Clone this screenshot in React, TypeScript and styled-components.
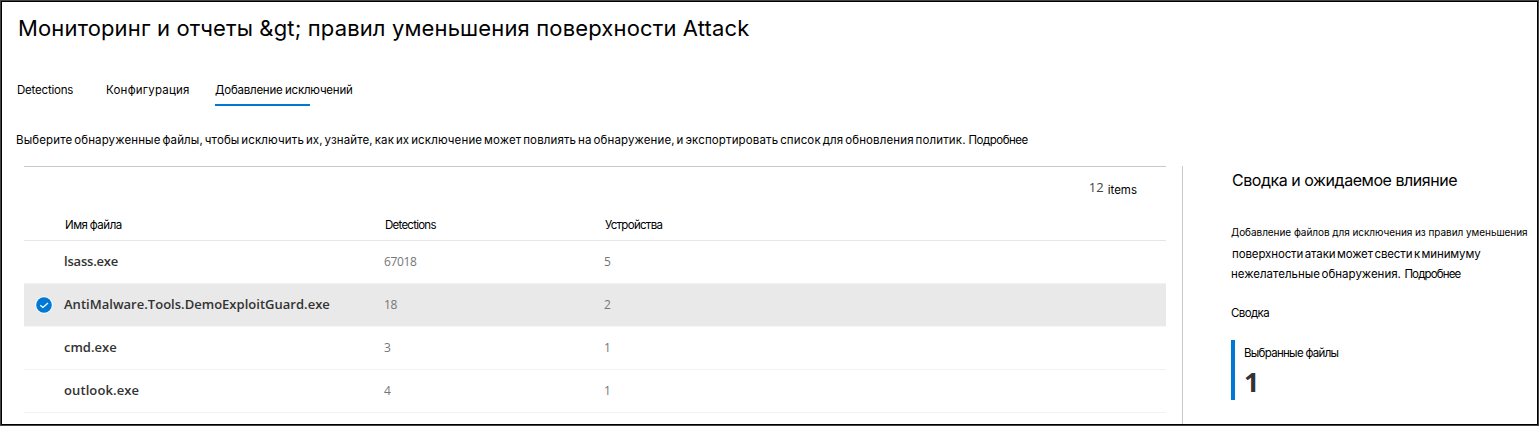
import React from "react";
import styled, { createGlobalStyle } from "styled-components";

const GlobalStyle = createGlobalStyle`
  *, *::before, *::after { box-sizing: border-box; }
  body { margin: 0; background: #fff; }
`;

const Page = styled.main`
  width: 1539px;
  height: 426px;
  border: 1px solid #444;
  outline: 1px solid #000;
  outline-offset: -2px;
  background: #fff;
  color: #000;
  overflow: hidden;
  display: flex;
  flex-direction: column;
  font-family: Inter, "Liberation Sans", sans-serif;
`;

const Text = styled.span<{ $size?: number; $spacing?: number; $word?: number }>`
  display: block;
  white-space: nowrap;
  font-size: ${(p) => p.$size ?? 11.5}px;
  line-height: 20px;
  letter-spacing: ${(p) => p.$spacing ?? 0}px;
  word-spacing: ${(p) => p.$word ?? 0}px;
`;

const Title = styled.h1`
  margin: 0;
  padding: 11px 0 0 17px;
  font-size: 22px;
  font-weight: 400;
  line-height: 32px;
  letter-spacing: 0.14px;
  white-space: nowrap;
`;

const Tabs = styled.nav`
  display: flex;
  padding: 36px 0 0 16px;
`;

const Tab = styled.div<{ $width: number; $active?: boolean }>`
  width: ${(p) => p.$width}px;
  height: 26px;

  &::after {
    content: "";
    display: ${(p) => (p.$active ? "block" : "none")};
    width: 95px;
    height: 2px;
    margin-top: 4px;
    background: #0078d4;
  }
`;

const Description = styled.p`
  display: flex;
  gap: 3px;
  margin: 0;
  padding: 24px 0 0 15px;
`;

const Body = styled.div`
  display: flex;
  flex: 1;
  margin-top: 16px;
`;

const TableArea = styled.section`
  width: 1142px;
  margin-left: 23px;
  border-top: 1px solid #c8c8c8;
`;

const Count = styled.div`
  display: flex;
  justify-content: flex-end;
  gap: 4px;
  height: 44px;
  padding: 11px 29px 0 0;
`;

const CountNumber = styled.span`
  color: #444;
  font: 13px/18px "Open Sans", "Noto Sans", sans-serif;
`;

const CountLabel = styled.span`
  padding-top: 3px;
  font-size: 11.5px;
  line-height: 18px;
`;

const Row = styled.div<{ $selected?: boolean }>`
  display: grid;
  grid-template-columns: 40px 320px 220px 1fr;
  align-items: center;
  height: 43px;
  border-bottom: 1px solid ${(p) => (p.$selected ? "#f7f7f7" : "#f3f2f1")};
  background: ${(p) => (p.$selected ? "#e9e9e9" : "transparent")};
  background-clip: padding-box;
`;

const HeaderRow = styled(Row)`
  height: 30px;
  padding: 0 0 2px 1px;
  border-bottom-color: #e6e6e6;
`;

const FileName = styled.span<{ $spacing: number }>`
  padding-bottom: 2px;
  color: #333;
  font: 600 13px/18px "Open Sans", "Noto Sans", sans-serif;
  letter-spacing: ${(p) => p.$spacing}px;
`;

const Value = styled.span`
  color: #767676;
  font: 12px/18px "Open Sans", "Noto Sans", sans-serif;
  letter-spacing: -0.35px;
`;

const CheckCell = styled.span`
  display: flex;
  padding-left: 11px;
`;

const Summary = styled.aside`
  width: 355px;
  margin: 0 0 1px 16px;
  padding-left: 48px;
  border-left: 1px solid #c8c8c8;
`;

const SummaryTitle = styled.h2`
  margin: 0;
  padding: 2px 0 0 1px;
  font-size: 16px;
  font-weight: 400;
  line-height: 24px;
  letter-spacing: -0.46px;
  white-space: nowrap;
`;

const SummaryText = styled.div`
  padding-top: 30px;
`;

const TextLine = styled.div<{ $indent?: number; $height: number }>`
  display: flex;
  gap: 3.5px;
  height: ${(p) => p.$height}px;
  padding-left: ${(p) => p.$indent ?? 0}px;
`;

const Metric = styled.div`
  height: 60px;
  margin-top: 17px;
  padding: 3px 0 0 9px;
  border-left: 4px solid #0078d4;
`;

const MetricValue = styled.strong`
  display: block;
  color: #333;
  font: 700 27px/36px "Open Sans", "Noto Sans", sans-serif;
  margin-top: 1px;
`;

function Check() {
  return (
    <svg width="18" height="18" viewBox="0 0 18 18" fill="none">
      <circle cx="9" cy="9" r="8.8" fill="#f8fbfe" />
      <circle cx="9" cy="9" r="7.8" fill="#0078d4" />
      <path d="M5.3 9.2 7.9 11.5 13 7" stroke="#fff" strokeWidth="1.3" />
    </svg>
  );
}

const files = [
  { name: "lsass.exe", detections: 67018, devices: 5, spacing: -0.2 },
  { name: "AntiMalware.Tools.DemoExploitGuard.exe", detections: 18, devices: 2, spacing: 0.02, selected: true },
  { name: "cmd.exe", detections: 3, devices: 1, spacing: 0 },
  { name: "outlook.exe", detections: 4, devices: 1, spacing: 0.1 },
];

export default function App() {
  return (
    <>
      <GlobalStyle />
      <Page>
        <Title>Мониторинг и отчеты &amp;gt; правил уменьшения поверхности Attack</Title>
        <Tabs>
          <Tab $width={89}><Text $spacing={-0.2}>Detections</Text></Tab>
          <Tab $width={109}><Text $spacing={0.22}>Конфигурация</Text></Tab>
          <Tab $width={140} $active><Text $spacing={-0.22} $word={-0.5}>Добавление исключений</Text></Tab>
        </Tabs>
        <Description>
          <Text $spacing={0.13} $word={-1.45}>
            Выберите обнаруженные файлы, чтобы исключить их, узнайте, как их исключение может повлиять на обнаружение, и экспортировать список для обновления политик.
          </Text>
          <Text $spacing={-0.5}>Подробнее</Text>
        </Description>
        <Body>
          <TableArea>
            <Count><CountNumber>12</CountNumber><CountLabel>items</CountLabel></Count>
            <HeaderRow>
              <span />
              <Text $spacing={-0.45} $word={-0.6}>Имя файла</Text>
              <Text $spacing={-0.75}>Detections</Text>
              <Text $spacing={-0.7}>Устройства</Text>
            </HeaderRow>
            {files.map((file) => (
              <Row key={file.name} $selected={file.selected}>
                <CheckCell>{file.selected && <Check />}</CheckCell>
                <FileName $spacing={file.spacing}>{file.name}</FileName>
                <Value>{file.detections}</Value>
                <Value>{file.devices}</Value>
              </Row>
            ))}
          </TableArea>
          <Summary>
            <SummaryTitle>Сводка и ожидаемое влияние</SummaryTitle>
            <SummaryText>
              <TextLine $height={22}>
                <Text $size={10} $spacing={-0.05}>Добавление файлов для исключения из правил уменьшения</Text>
              </TextLine>
              <TextLine $height={20} $indent={1}>
                <Text $spacing={-0.12} $word={-1.6}>поверхности атаки может свести к минимуму</Text>
              </TextLine>
              <TextLine $height={39}>
                <Text $spacing={0} $word={-1.6}>нежелательные обнаружения.</Text>
                <Text $spacing={-0.85}>Подробнее</Text>
              </TextLine>
              <Text $spacing={-0.6}>Сводка</Text>
            </SummaryText>
            <Metric>
              <Text $spacing={-0.7}>Выбранные файлы</Text>
              <MetricValue>1</MetricValue>
            </Metric>
          </Summary>
        </Body>
      </Page>
    </>
  );
}
